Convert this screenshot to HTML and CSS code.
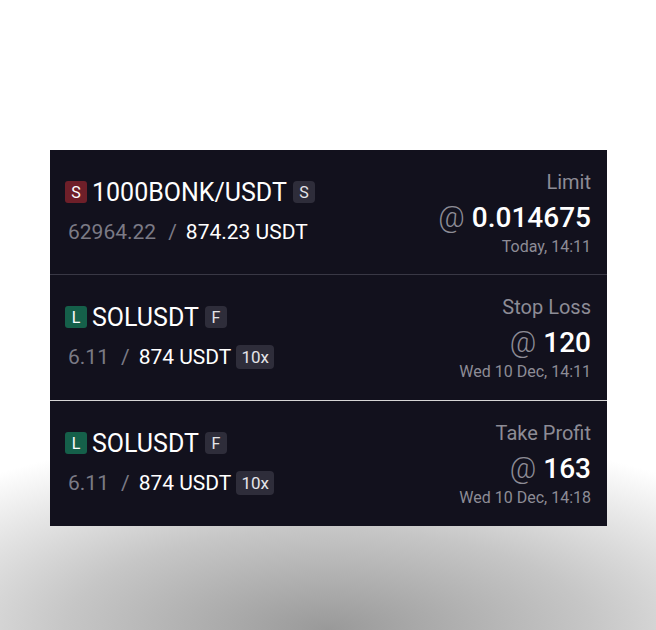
FILE: index.html
```html
<!DOCTYPE html>
<html lang="en">
<head>
    <meta charset="UTF-8" />
    <meta name="viewport" content="width=device-width, initial-scale=1.0" >
    <title>Orders</title>
    <link rel="stylesheet" href="styles.css">
</head>
<body>
    <div id="orders">
        <div class="order">
            <div class="left">
                <div class="pair">
                    <span class="side short">S</span>
                    <span class="symbol">1000BONK/USDT</span>
                    <span class="tag">S</span>
                </div>
                <div class="amount">
                    <span class="qty">62964.22</span>
                    <span class="slash">/</span>
                    <span class="value">874.23 USDT</span>
                </div>
            </div>
            <div class="right">
                <div class="type">Limit</div>
                <div class="price"><span class="at">@</span> <b>0.014675</b></div>
                <div class="date">Today, 14:11</div>
            </div>
        </div>
        <div class="order split">
            <div class="left">
                <div class="pair">
                    <span class="side long">L</span>
                    <span class="symbol">SOLUSDT</span>
                    <span class="tag">F</span>
                </div>
                <div class="amount">
                    <span class="qty">6.11</span>
                    <span class="slash">/</span>
                    <span class="value">874 USDT</span>
                    <span class="lev">10x</span>
                </div>
            </div>
            <div class="right">
                <div class="type">Stop Loss</div>
                <div class="price"><span class="at">@</span> <b>120</b></div>
                <div class="date">Wed 10 Dec, 14:11</div>
            </div>
        </div>
        <div class="order last">
            <div class="left">
                <div class="pair">
                    <span class="side long">L</span>
                    <span class="symbol">SOLUSDT</span>
                    <span class="tag">F</span>
                </div>
                <div class="amount">
                    <span class="qty">6.11</span>
                    <span class="slash">/</span>
                    <span class="value">874 USDT</span>
                    <span class="lev">10x</span>
                </div>
            </div>
            <div class="right">
                <div class="type">Take Profit</div>
                <div class="price"><span class="at">@</span> <b>163</b></div>
                <div class="date">Wed 10 Dec, 14:18</div>
            </div>
        </div>
    </div>
</body>
</html>
```

FILE: styles.css
```css
html{
    height: 100%;
}
body{
    font-family: Roboto, 'Noto Sans', sans-serif;
    margin: 0;
    padding: 150px 0 0 50px;
    min-height: 100%;
    box-sizing: border-box;
    background: #fff radial-gradient(ellipse 80% 32% at 50% 100%, #999999 0%, #c6c6c6 50%, #ffffff 100%) no-repeat;
}
#orders{
    width: 557px;
    background: #12111d;
}
.order{
    height: 125px;
    box-sizing: border-box;
    display: flex;
    justify-content: space-between;
    padding: 0 16px 0 15px;
    border-bottom: 1px solid #393845;
}
.order.split{
    height: 126px;
    border-bottom-color: #d6d6d6;
}
.order.last{
    border-bottom: none;
}
.left{
    padding-top: 29px;
}
.pair{
    display: flex;
    align-items: center;
    height: 26px;
}
.side{
    width: 22px;
    height: 22px;
    border-radius: 3px;
    color: #fff;
    font-size: 16px;
    display: flex;
    align-items: center;
    justify-content: center;
}
.short{
    background: #6e1f29;
}
.long{
    background: #15604a;
}
.symbol{
    color: #fff;
    font-size: 25px;
    margin: 0 6px 0 5px;
}
.tag{
    width: 22px;
    height: 22px;
    border-radius: 4px;
    background: #2e2d3a;
    color: #e4e4e8;
    font-size: 16px;
    display: flex;
    align-items: center;
    justify-content: center;
}
.amount{
    display: flex;
    align-items: center;
    margin-top: 15px;
    padding-left: 3px;
    font-size: 21px;
    height: 24px;
}
.qty{
    color: #7b7a85;
}
.slash{
    color: #7b7a85;
    margin: 0 9px 0 12px;
}
.value{
    color: #fff;
}
.lev{
    margin-left: 5px;
    background: #2e2d3a;
    color: #e4e4e8;
    font-size: 17px;
    padding: 0 5px;
    height: 24px;
    border-radius: 4px;
    display: flex;
    align-items: center;
}
.right{
    text-align: right;
    padding-top: 20px;
}
.type{
    color: #8d8c96;
    font-size: 20px;
    line-height: 24px;
}
.price{
    color: #fff;
    font-size: 28px;
    line-height: 32px;
    margin-top: 7px;
}
.price b{
    font-weight: 500;
}
.at{
    color: #8d8c96;
    font-size: 29px;
    font-weight: 300;
}
.date{
    color: #8d8c96;
    font-size: 16px;
    line-height: 18px;
    margin-top: 4px;
}
```
